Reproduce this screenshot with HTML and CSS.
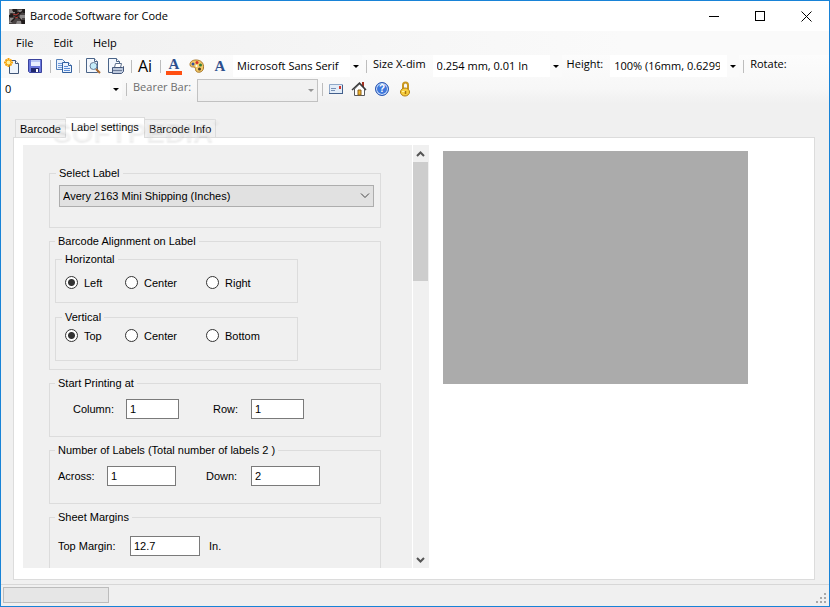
FILE: index.html
```html
<!DOCTYPE html>
<html lang="en">

<head>
  <meta charset="utf-8">
  <title>Barcode Software for Code</title>
  <link rel="stylesheet" href="styles.css">
</head>

<body>
  <div class="window">
    <header class="titlebar">
      <svg class="app-icon" width="16" height="15" viewBox="0 0 16 15">
        <rect width="16" height="15" fill="#4a4444"/>
        <path d="M0 0h3v2h3v2H2v2H0zM9 1h4v2h-3zM11 6h5v3h-3v2h-3zM1 9h4v2H3v3H0zM8 12h4v3H7z" fill="#8d8989"/>
        <path d="M4 0h4v3h3v2H6V3H4zM13 0h3v4h-2zM0 6h4v2H0zM12 11h4v4h-3z" fill="#1f1b1b"/>
        <path d="M1 5l5 1 4 3 4 4M14 2L9 6 5 10l-3 3" fill="none" stroke="#231c1c" stroke-width="1.5"/>
        <path d="M4 5l3 1 3-2M6 9l3-1" fill="none" stroke="#b13a35"/>
      </svg>
      <h1 class="title">Barcode Software for Code</h1>
      <div class="window-buttons">
        <button type="button" aria-label="Minimize"><svg width="11" height="11"><path d="M0 5.500h10" stroke="#000"/></svg></button>
        <button type="button" aria-label="Maximize"><svg width="11" height="11"><rect x=".5" y=".5" width="9" height="9" fill="none" stroke="#000"/></svg></button>
        <button type="button" aria-label="Close"><svg width="11" height="11"><path d="M.5 .5l10 10M10.500 .5l-10 10" stroke="#000"/></svg></button>
      </div>
    </header>

    <nav class="menu">
      <button type="button">File</button>
      <button type="button">Edit</button>
      <button type="button">Help</button>
    </nav>

    <div class="toolbars">
      <div class="toolbar">
        <button type="button" class="tool" aria-label="New">
          <svg width="16" height="16" viewBox="0 0 16 16">
            <path d="M5.500 2.500h6l3 3v10h-9z" fill="#eef4fc" stroke="#3f5578"/>
            <path d="M11.500 2.500v3h3" fill="#fff" stroke="#3f5578"/>
            <path d="M4.500 0v9M0 4.500h9M1.500 1.500l6 6M7.500 1.500l-6 6" stroke="#f5a30c" stroke-width="2"/>
            <circle cx="4.500" cy="4.500" r="2" fill="#fff3a0"/>
          </svg>
        </button>
        <button type="button" class="tool" aria-label="Save">
          <svg width="16" height="16" viewBox="0 0 16 16">
            <path d="M1.500 1.500h13v13h-12l-1-1z" fill="#6a78dc" stroke="#3a429c"/>
            <path d="M4 2h9v6H4z" fill="#e8efff"/>
            <path d="M4 2h9v2H4z" fill="#b9c8f5"/>
            <path d="M4 10h8v4H4z" fill="#20286c"/>
            <path d="M9 11h2v3H9z" fill="#fff"/>
          </svg>
        </button>
        <span class="separator"></span>
        <button type="button" class="tool" aria-label="Copy">
          <svg width="16" height="16" viewBox="0 0 16 16">
            <path d="M.5 1.500h6l3 3v7h-9z" fill="#eaf2fd" stroke="#5580b8"/>
            <path d="M2 5.500h5M2 7.500h5M2 9.500h5" stroke="#6f9ada"/>
            <path d="M6.500 4.500h6l3 3v7h-9z" fill="#eaf2fd" stroke="#315f9e"/>
            <path d="M12.500 4.500v3h3" fill="#fff" stroke="#315f9e"/>
            <path d="M8 8.500h4M8 10.500h6M8 12.500h6" stroke="#5b8cd6"/>
          </svg>
        </button>
        <span class="separator"></span>
        <button type="button" class="tool" aria-label="Print preview">
          <svg width="16" height="16" viewBox="0 0 16 16">
            <path d="M1.500 .5h8l3 3v11h-11z" fill="#f3f7fd" stroke="#4a6488"/>
            <path d="M9.500 .5v3h3" fill="#fff" stroke="#4a6488"/>
            <circle cx="8.500" cy="8" r="3.500" fill="#c4ecfa" stroke="#6b7f99"/>
            <path d="M11 11l4 4" stroke="#a9662b" stroke-width="2"/>
          </svg>
        </button>
        <button type="button" class="tool" aria-label="Print">
          <svg width="16" height="16" viewBox="0 0 16 16">
            <path d="M.5 .5h8l3 3v11H.5z" fill="#f3f7fd" stroke="#4a6488"/>
            <path d="M8.500 .5v3h3" fill="#fff" stroke="#4a6488"/>
            <path d="M7.500 5.500h6l-1 4h-6z" fill="#fff" stroke="#5d708e"/>
            <path d="M4.500 9.500h10l1-1v5l-2 2h-9z" fill="#bcc8dc" stroke="#44577a"/>
            <path d="M5 12.500h9" stroke="#6c7c99"/>
          </svg>
        </button>
        <span class="separator"></span>
        <button type="button" class="tool tool-text">Ai</button>
        <span class="separator"></span>
        <button type="button" class="tool tool-color" aria-label="Text color"><span class="letter">A</span></button>
        <button type="button" class="tool" aria-label="Background color">
          <svg width="16" height="16" viewBox="0 0 16 16">
            <path d="M7 2C3 2 1 4 1 6.500S3 9 5 9s1 2 2 4 7 2 7.500-3S12 2 7 2z" fill="#f3c968" stroke="#a8772a"/>
            <circle cx="4" cy="6" r="1.500" fill="#35539f"/>
            <circle cx="8" cy="4.500" r="1.500" fill="#d4322b"/>
            <circle cx="11.500" cy="7" r="1.500" fill="#347d39"/>
            <circle cx="7.500" cy="8" r="1" fill="#fff"/>
            <circle cx="10.500" cy="11" r="1.500" fill="#4a3b2a"/>
          </svg>
        </button>
        <button type="button" class="tool tool-font" aria-label="Font"><span class="letter">A</span></button>
        <select class="combo" aria-label="Font name"><option>Microsoft Sans Serif</option></select>
        <span class="separator after-combo"></span>
        <label class="tool-label" for="xdim">Size X-dim</label>
        <select class="combo" id="xdim"><option>0.254 mm, 0.01 In</option></select>
        <label class="tool-label" for="height">Height:</label>
        <select class="combo" id="height"><option>100% (16mm, 0.6299 In)</option></select>
        <span class="separator after-combo"></span>
        <span class="tool-label">Rotate:</span>
      </div>
      <div class="toolbar">
        <select class="combo" aria-label="Rotation"><option>0</option></select>
        <span class="separator after-combo"></span>
        <label class="tool-label disabled" for="bearer">Bearer Bar:</label>
        <select class="combo combo-disabled" id="bearer" disabled><option></option></select>
        <span class="separator after-combo"></span>
        <button type="button" class="tool" aria-label="E-mail">
          <svg width="16" height="16" viewBox="0 0 16 16">
            <path d="M1.500 3.500h13v9h-13z" fill="#e3edf8" stroke="#90a8c8"/>
            <path d="M1 12.500h14M14.500 4v9" stroke="#425f8c"/>
            <path d="M3 7.500h5M3 9.500h4" stroke="#7890b5"/>
            <path d="M11 5h2v3h-2z" fill="#d13a2e"/>
          </svg>
        </button>
        <button type="button" class="tool" aria-label="Home page">
          <svg width="16" height="16" viewBox="0 0 16 16">
            <path d="M11 1h2v5h-2z" fill="#a33120"/>
            <path d="M3.500 8v6.500h10V8l-5-5z" fill="#fff" stroke="#58595c"/>
            <path d="M1 9l7.500-7L15 9" fill="none" stroke="#3a3a3a" stroke-width="1.500"/>
            <path d="M7 9h3v5H7z" fill="#f1b52c" stroke="#8c601b"/>
          </svg>
        </button>
        <button type="button" class="tool tool-help" aria-label="Help"><span class="help-mark">?</span></button>
        <button type="button" class="tool" aria-label="License">
          <svg width="16" height="16" viewBox="0 0 16 16">
            <path d="M6 8V4a2.500 2.500 0 0 1 5 0v4" fill="none" stroke="#c9971f" stroke-width="2"/>
            <ellipse cx="8" cy="11" rx="4.500" ry="4" fill="#f8cf3f" stroke="#b07c12"/>
            <path d="M5 10.500h4" stroke="#fff1a0"/>
            <path d="M8.500 10v3" stroke="#a8740c" stroke-width="1.500"/>
          </svg>
        </button>
      </div>
    </div>

    <main class="content">
      <div class="tabs" role="tablist">
        <button type="button" class="tab" role="tab">Barcode</button>
        <button type="button" class="tab tab-selected" role="tab" aria-selected="true">Label settings</button>
        <button type="button" class="tab" role="tab">Barcode Info</button>
        <span class="watermark" aria-hidden="true">SOFTPEDIA<sup>®</sup></span>
      </div>

      <div class="tab-page">
        <form class="settings">
          <fieldset class="group group-select">
            <legend>Select Label</legend>
            <select class="label-select" aria-label="Select Label"><option>Avery 2163 Mini Shipping (Inches)</option></select>
          </fieldset>

          <fieldset class="group group-alignment">
            <legend>Barcode Alignment on Label</legend>
            <fieldset class="group radios">
              <legend>Horizontal</legend>
              <label><input type="radio" name="horizontal" checked>Left</label>
              <label><input type="radio" name="horizontal">Center</label>
              <label><input type="radio" name="horizontal">Right</label>
            </fieldset>
            <fieldset class="group radios radios-vertical">
              <legend>Vertical</legend>
              <label><input type="radio" name="vertical" checked>Top</label>
              <label><input type="radio" name="vertical">Center</label>
              <label><input type="radio" name="vertical">Bottom</label>
            </fieldset>
          </fieldset>

          <fieldset class="group">
            <legend>Start Printing at</legend>
            <div class="fields fields-start">
              <label for="column">Column:</label>
              <input type="text" id="column" value="1">
              <label for="row">Row:</label>
              <input type="text" id="row" value="1">
            </div>
          </fieldset>

          <fieldset class="group">
            <legend>Number of Labels (Total number of labels 2 )</legend>
            <div class="fields fields-number">
              <label for="across">Across:</label>
              <input type="text" id="across" value="1">
              <label for="down">Down:</label>
              <input type="text" id="down" value="2">
            </div>
          </fieldset>

          <fieldset class="group">
            <legend>Sheet Margins</legend>
            <div class="fields fields-margin">
              <label for="top-margin">Top Margin:</label>
              <input type="text" id="top-margin" value="12.7">
              <span>In.</span>
            </div>
          </fieldset>
        </form>

        <div class="scrollbar">
          <button type="button" aria-label="Scroll up"><svg width="9" height="6"><path d="M1 5l3.500-3.500L8 5" fill="none" stroke="#555" stroke-width="2"/></svg></button>
          <div class="thumb"></div>
          <button type="button" aria-label="Scroll down"><svg width="9" height="6"><path d="M1 1l3.500 3.500L8 1" fill="none" stroke="#555" stroke-width="2"/></svg></button>
        </div>

        <div class="preview"></div>
      </div>
    </main>

    <footer class="statusbar">
      <div class="progress"></div>
      <svg class="grip" width="11" height="11" fill="#a8a8a8"><path d="M8 0h2v2h-2zM4 4h2v2h-2zM8 4h2v2h-2zM0 8h2v2h-2zM4 8h2v2h-2zM8 8h2v2h-2z"/></svg>
    </footer>
  </div>
</body>

</html>
```
FILE: styles.css
```css
* {
  box-sizing: border-box;
}

body {
  margin: 0;
  font-family: "Liberation Sans", Arial, sans-serif;
  font-size: 11px;
  line-height: 14px;
  color: #000;
}

button,
select,
input {
  font: inherit;
  color: inherit;
}

button {
  padding: 0;
  border: none;
  background: none;
}

.window {
  display: flex;
  flex-direction: column;
  height: 100vh;
  border: 1px solid #1883d7;
  background: #f0f0f0;
}

/* title bar and menu */

.titlebar {
  display: flex;
  align-items: center;
  height: 30px;
  padding-left: 8px;
  background: #fff;
}

.title {
  flex: 1;
  margin: 0 0 0 5px;
  font: 11px/16px "Open Sans", "Noto Sans", sans-serif;
}

.window-buttons {
  display: flex;
}

.window-buttons button {
  display: flex;
  align-items: center;
  justify-content: center;
  width: 46px;
  height: 30px;
}

.menu {
  display: flex;
  gap: 20px;
  height: 24px;
  padding-left: 15px;
  background: linear-gradient(to right, #f0f0f0, #fafafa 75%);
  font: 11px/24px "Open Sans", "Noto Sans", sans-serif;
}

/* toolbars */

.toolbars {
  background: linear-gradient(#fcfcfc, #f7f7f7 70%, #f0f0f0);
  font: 11px/16px "Open Sans", "Noto Sans", sans-serif;
}

.toolbar {
  display: flex;
  height: 23px;
}

.toolbar + .toolbar {
  height: 25px;
}

.tool {
  display: flex;
  align-items: center;
  justify-content: center;
  flex: none;
  width: 23px;
  height: 22px;
  padding-right: 1px;
}

.tool-text {
  font-size: 16px;
}

.letter {
  width: 16px;
  height: 17px;
  font: bold 15px/16px "Liberation Serif", serif;
  text-align: center;
  color: #2d4f8e;
}

.tool-color .letter {
  border-bottom: 4px solid #ff4f12;
  line-height: 12px;
}

.help-mark {
  width: 14px;
  height: 14px;
  border: 1px solid #2a56b0;
  border-radius: 50%;
  background: #3f78dc;
  box-shadow: inset 0 0 0 1px #d5e4fb;
  color: #fff;
  font: bold 10px/12px "Liberation Sans", sans-serif;
}

.separator {
  flex: none;
  width: 6px;
  height: 13px;
  margin-top: 5px;
  background: linear-gradient(#bdbdbd, #bdbdbd) 3px 0 / 1px 100% no-repeat;
}

.after-combo {
  margin-left: 1px;
}

.tool-label {
  padding: 1px 6px 0 5px;
  white-space: nowrap;
}

.separator + .tool-label {
  padding-left: 4px;
}

.disabled {
  color: #6d6d6d;
}

.combo {
  appearance: none;
  flex: none;
  width: 129px;
  height: 22px;
  margin-left: 1px;
  padding: 0 19px 0 4px;
  border: none;
  border-radius: 0;
  background: #fff url('data:image/svg+xml,<svg xmlns="http://www.w3.org/2000/svg" width="12" height="22"><path fill="%23fafafa" d="M0 0h12v22H0z"/><path d="M3 10h6L6 13z"/></svg>') right 0 top 0 no-repeat;
}

.toolbar + .toolbar .combo {
  width: 121px;
}

.toolbar + .toolbar .combo:first-child {
  margin-left: 0;
}

.toolbar + .toolbar .combo-disabled {
  height: 23px;
  margin: 1px 0 0;
  border: 1px solid #adadad;
  background: #efefef url('data:image/svg+xml,<svg xmlns="http://www.w3.org/2000/svg" width="12" height="22"><path fill="%236d6d6d" d="M3 9h6L6 12z"/></svg>') right 0 top 0 no-repeat;
}

/* tabs */

.content {
  display: flex;
  flex: 1;
  flex-direction: column;
  min-height: 0;
  padding: 14px 14px 4px 12px;
}

.tabs {
  position: relative;
  display: flex;
  align-items: flex-end;
  padding-left: 2px;
}

.tab {
  height: 18px;
  padding: 0 4px;
  border: 1px solid #dcdcdc;
  border-bottom: none;
  background: #f0f0f0;
}

.tab + .tab {
  border-left: none;
}

.tab.tab-selected {
  height: 21px;
  margin-bottom: -1px;
  padding: 0 5px 2px;
  background: #fff;
}

.watermark {
  position: absolute;
  top: 1px;
  left: 40px;
  font: bold 28px/28px "Liberation Sans", sans-serif;
  color: rgba(255, 255, 255, 0.3);
  text-shadow: 0 2px 2px rgba(0, 0, 0, 0.07);
  pointer-events: none;
}

.watermark sup {
  font-size: 8px;
  line-height: 8px;
  vertical-align: top;
}

.tab-page {
  display: flex;
  flex: 1;
  min-height: 0;
  padding: 7px 9px 11px;
  border: 1px solid #dcdcdc;
  background: #fff;
}

/* label settings form */

.settings {
  display: flex;
  flex: none;
  flex-direction: column;
  gap: 6px;
  width: 389px;
  padding: 21px 31px 0 26px;
  overflow: hidden;
  background: #f0f0f0;
}

.group {
  flex: none;
  min-width: 0;
  margin: 0;
  padding: 9px 6px 17px 8px;
  border: 1px solid #dcdcdc;
}

.group legend {
  margin-left: -3px;
  padding: 0 3px;
}

.group-select {
  padding: 5px 6px 20px 9px;
}

.label-select {
  display: block;
  appearance: none;
  width: 100%;
  height: 22px;
  padding: 0 20px 0 3px;
  border: 1px solid #adadad;
  border-radius: 0;
  background: #e1e1e1 url('data:image/svg+xml,<svg xmlns="http://www.w3.org/2000/svg" width="10" height="6"><path d="M1 .5l4 4L9 .5" fill="none" stroke="%23444"/></svg>') right 3px center no-repeat;
}

.group-alignment {
  padding: 4px 5px 8px;
}

.group-alignment > legend {
  margin-left: 0;
}

.radios {
  display: grid;
  grid-template-columns: 60px 81px auto;
  width: 243px;
  padding: 10px 9px 13px;
}

.radios + .radios {
  margin-top: 7px;
}

.radios.radios-vertical {
  padding: 5px 9px 18px;
}

.radios label {
  display: flex;
  align-items: center;
  gap: 6px;
  height: 13px;
}

.radios input {
  appearance: none;
  width: 13px;
  height: 13px;
  margin: 0;
  border: 1px solid #333;
  border-radius: 50%;
  background: #fff;
}

.radios input:checked {
  background: radial-gradient(circle, #333 3px, #fff 4px);
}

.fields {
  display: grid;
  align-items: center;
}

.fields input {
  width: 100%;
  height: 20px;
  padding: 0 3px;
  border: 1px solid #7a7a7a;
  background: #fff;
}

.fields-start {
  grid-template-columns: 53px 53px 72px 53px;
  padding-left: 15px;
}

.fields-start input + label {
  padding-left: 34px;
}

.fields-number {
  grid-template-columns: 49px 69px 75px 69px;
}

.fields-number input + label {
  padding-left: 30px;
}

.fields-margin {
  grid-template-columns: 72px 70px auto;
  padding-top: 3px;
}

.fields-margin span {
  padding-left: 9px;
}

/* scroll bar and preview */

.scrollbar {
  display: flex;
  flex: none;
  flex-direction: column;
  width: 17px;
  padding-right: 1px;
  border-left: 1px solid #fff;
  background: #f0f0f0;
}

.scrollbar button {
  display: flex;
  align-items: center;
  justify-content: center;
  height: 17px;
}

.thumb {
  height: 119px;
  margin-bottom: auto;
  background: #cdcdcd;
}

.preview {
  width: 305px;
  height: 233px;
  margin: 6px 0 0 14px;
  background: #ababab;
}

/* status bar */

.statusbar {
  display: flex;
  align-items: flex-start;
  justify-content: space-between;
  height: 22px;
  padding: 2px 2px 0;
  border-top: 1px solid #d7d7d7;
}

.progress {
  width: 106px;
  height: 16px;
  border: 1px solid #bcbcbc;
  background: #e6e6e6;
}

.grip {
  align-self: flex-end;
  margin-bottom: 2px;
}
```
